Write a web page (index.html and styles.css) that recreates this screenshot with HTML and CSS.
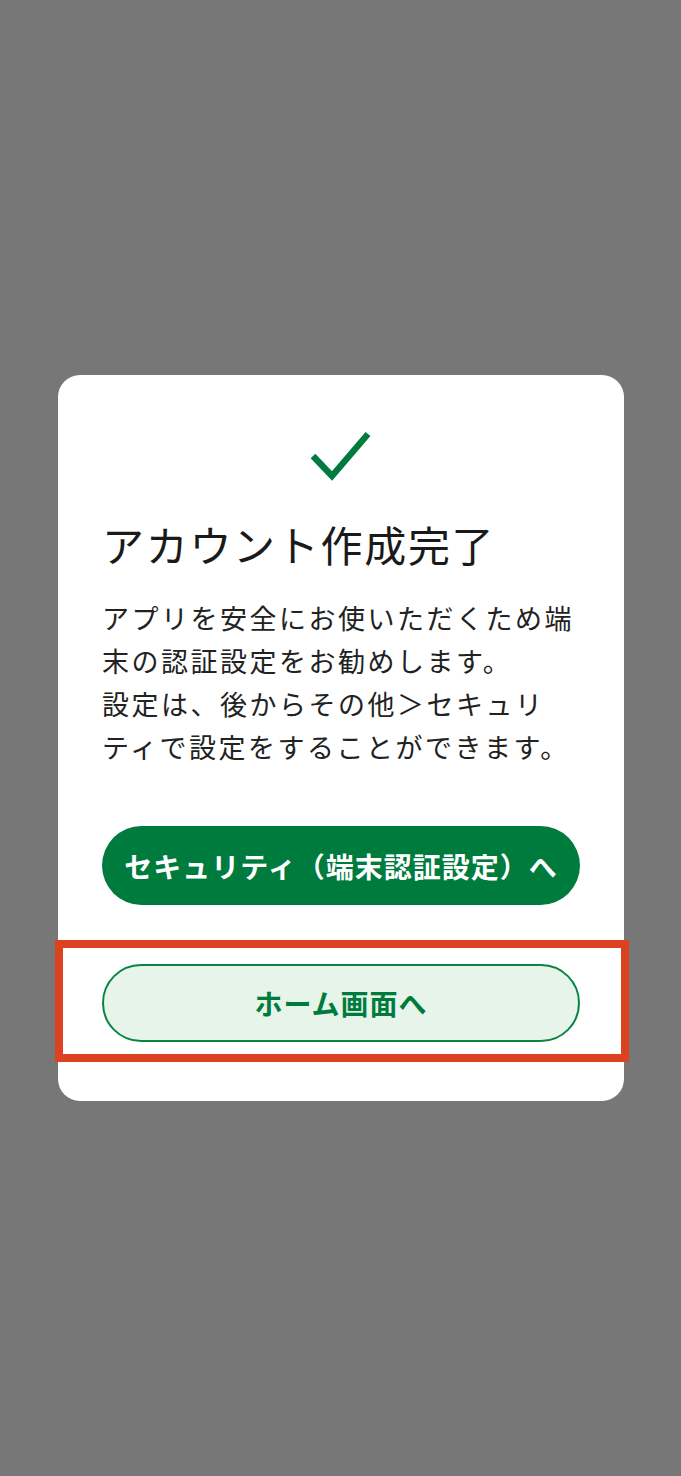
FILE: index.html
```html
<!DOCTYPE html>
<html lang="ja">
<head>
<meta charset="utf-8">
<title>アカウント作成完了</title>
<link rel="stylesheet" href="styles.css">
</head>
<body>
<main class="overlay">
  <section class="card">
    <div class="check">
      <svg width="62" height="50" viewBox="0 0 62 50" aria-hidden="true">
        <polyline points="3,25 22,45 58,3" fill="none" stroke="#007b3e" stroke-width="6.5"/>
      </svg>
    </div>
    <h1 class="title">アカウント作成完了</h1>
    <p class="message">アプリを安全にお使いただくため端<br>末の認証設定をお勧めします。<br>設定は、後からその他＞セキュリ<br>ティで設定をすることができます。</p>
    <div class="actions">
      <button class="btn btn-primary">セキュリティ（端末認証設定）へ</button>
      <div class="highlight-wrap">
        <button class="btn btn-secondary">ホーム画面へ</button>
        <div class="highlight"></div>
      </div>
    </div>
  </section>
</main>
</body>
</html>
```

FILE: styles.css
```css
* { box-sizing: border-box; }
html, body { margin: 0; padding: 0; }
body {
  background: #777777;
  font-family: "Noto Sans CJK JP", "Noto Sans", sans-serif;
  color: #1a1a1a;
}
.overlay {
  min-height: 100vh;
  display: flex;
  align-items: center;
  justify-content: center;
  padding-left: 1px;
}
.card {
  width: 566px;
  background: #ffffff;
  border-radius: 22px;
  padding: 56px 44px 59px 44px;
  display: flex;
  flex-direction: column;
}
.check {
  display: flex;
  justify-content: center;
  height: 50px;
}
.check svg { display: block; }
.title {
  margin: 33px 0 0 0;
  font-size: 42px;
  font-weight: 400;
  line-height: 60px;
  letter-spacing: 1.7px;
  color: #1a1a1a;
}
.message {
  margin: 22px 0 0 0;
  font-size: 27px;
  line-height: 43px;
  letter-spacing: 2.5px;
  color: #222222;
  white-space: nowrap;
}
.actions {
  margin-top: 58px;
  display: flex;
  flex-direction: column;
  gap: 59px;
}
.btn {
  width: 100%;
  height: 79px;
  border-radius: 40px;
  font-family: "Noto Sans CJK JP", "Noto Sans", sans-serif;
  font-size: 28px;
  font-weight: 700;
  letter-spacing: 1px;
  display: flex;
  align-items: center;
  justify-content: center;
  padding: 0;
  cursor: pointer;
}
.btn-primary {
  background: #007b3e;
  color: #ffffff;
  border: none;
}
.btn-secondary {
  height: 78px;
  background: #e6f4ea;
  color: #007b3e;
  border: 2px solid #0a8444;
}
.highlight-wrap {
  position: relative;
}
.highlight {
  position: absolute;
  top: -24px;
  bottom: -20px;
  left: -47px;
  right: -49px;
  border: 8px solid #dc4120;
  pointer-events: none;
}
```
